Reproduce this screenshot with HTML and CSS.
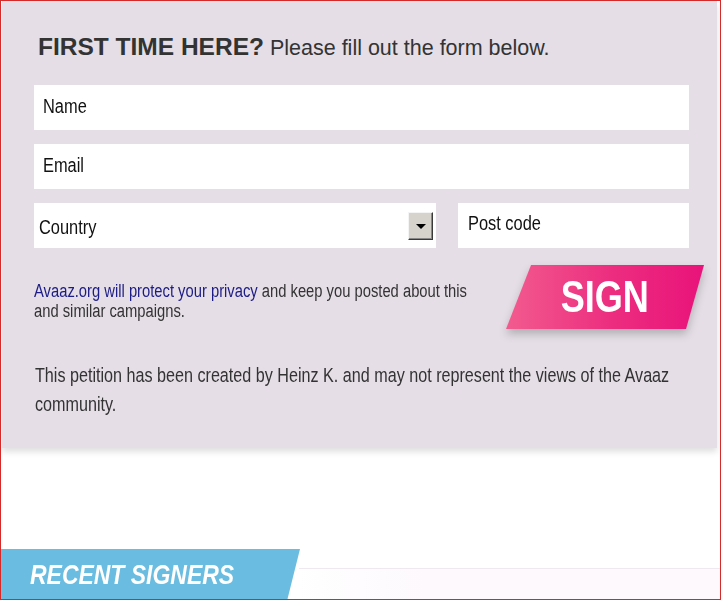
FILE: index.html
```html
<!DOCTYPE html>
<html>
  <head>
    <title>Sign the petition</title>
    <link rel="stylesheet" href="styles.css">
  </head>
  <body>
    <div class="frame">
      <div class="top-tab"></div>

      <div class="sign-box">
        <h2 class="sign-title"><strong>FIRST TIME HERE?</strong> Please fill out the form below.</h2>

        <div class="field"><span class="narrow">Name</span></div>
        <div class="field"><span class="narrow">Email</span></div>

        <div class="field-row">
          <div class="field select">
            <span class="narrow">Country</span>
            <span class="select-arrow"></span>
          </div>
          <div class="field postcode"><span class="narrow">Post code</span></div>
        </div>

        <div class="sign-row">
          <div class="privacy">
            <p class="narrow-block">
              <a href="#">Avaaz.org will protect your privacy</a> and keep you posted about this
              and similar campaigns.
            </p>
          </div>
          <div class="sign-wrap">
            <button class="sign-button"><span class="narrow">SIGN</span></button>
          </div>
        </div>

        <div class="disclaimer">
          <p class="narrow-block">This petition has been created by Heinz K. and may not represent the views of the Avaaz community.</p>
        </div>
      </div>

      <div class="signers">
        <div class="signers-tab"><span class="narrow">RECENT SIGNERS</span></div>
        <div class="signers-rule"></div>
      </div>
    </div>
  </body>
</html>
```

FILE: styles.css
```css
html, body {
  margin: 0;
  padding: 0;
  background: #fff;
}

body {
  font-family: 'Liberation Sans', Arial, sans-serif;
  color: #333;
}

/* no narrow face installed: squeeze Liberation Sans instead */
.narrow {
  display: inline-block;
  white-space: nowrap;
  transform: scaleX(0.82);
  transform-origin: 0 50%;
}

.narrow-block {
  width: calc(100% / 0.82);
  transform: scaleX(0.82);
  transform-origin: 0 0;
}

.frame {
  width: 721px;
  height: 600px;
  box-sizing: border-box;
  border: 1px solid #d42a2a;
  overflow: hidden;
  position: relative;
}

.top-tab {
  height: 0;
  width: 175px;
  margin-left: 505px;
  box-shadow: 0 1px 7px 2px rgba(60, 60, 60, 0.35);
}

.sign-box {
  background: #e5dee6;
  margin: 0 3px 0 1px;
  padding: 31px 28px 29px 32px;
  box-shadow: 0 4px 6px rgba(0, 0, 0, 0.12);
}

.sign-title {
  margin: 0 0 22px 4px;
  font-size: 21.5px;
  font-weight: normal;
  line-height: 30px;
  color: #333;
}

.sign-title strong {
  font-size: 24.5px;
  font-weight: bold;
}

.field {
  background: #fff;
  height: 45px;
  box-sizing: border-box;
  padding: 8px 9px 0;
  margin-bottom: 14px;
  font-size: 20px;
  line-height: 26px;
  color: #111;
}

.field-row {
  display: flex;
  gap: 22px;
}

.select {
  flex: 0 0 402px;
  display: flex;
  align-items: center;
  justify-content: space-between;
  padding: 3px 3px 0 5px;
}

.select-arrow {
  width: 25px;
  height: 28px;
  margin-top: -3px;
  box-sizing: border-box;
  background: #d6d3cd;
  border: 1px solid;
  border-color: #f4f4f4 #3a3a3a #3a3a3a #f4f4f4;
  box-shadow: inset -1px -1px 0 #888;
  display: flex;
  align-items: center;
  justify-content: center;
}

.select-arrow::after {
  content: "";
  border-left: 5px solid transparent;
  border-right: 5px solid transparent;
  border-top: 5px solid #000;
  margin-top: 2px;
}

.postcode {
  flex: 1;
  padding: 7px 10px 0;
}

.sign-row {
  display: flex;
  align-items: flex-start;
  justify-content: space-between;
  margin-top: 3px;
}

.privacy {
  width: 450px;
  margin-top: 16px;
}

.privacy p {
  margin: 0;
  font-size: 18px;
  line-height: 20px;
  color: #333;
}

.privacy a {
  color: #1c1c86;
  text-decoration: none;
}

.sign-wrap {
  margin-right: -15px;
  filter: drop-shadow(0 5px 4px rgba(0, 0, 0, 0.22));
}

.sign-button {
  width: 198px;
  height: 64px;
  border: 0;
  padding: 0;
  background: linear-gradient(90deg, #f25b8e 0%, #ec2c7f 55%, #e9137a 100%);
  clip-path: polygon(25px 0, 198px 0, 180px 64px, 0 64px);
  cursor: pointer;
  display: flex;
  align-items: center;
  justify-content: center;
}

.sign-button .narrow {
  font-weight: bold;
  font-size: 44px;
  color: #fff;
  transform: scaleX(0.82);
  transform-origin: 50% 50%;
}

.disclaimer {
  margin-top: 32px;
}

.disclaimer p {
  margin: 0 0 0 1px;
  font-size: 19.7px;
  line-height: 29px;
  color: #333;
}

.signers {
  margin-top: 101px;
  position: relative;
}

.signers-tab {
  width: 300px;
  height: 52px;
  margin-left: -1px;
  background: #6abde0;
  clip-path: polygon(0 0, 300px 0, 287px 52px, 0 52px);
  display: flex;
  align-items: center;
}

.signers-tab .narrow {
  margin-left: 30px;
  font-weight: bold;
  font-style: italic;
  font-size: 28px;
  color: #fff;
}

.signers-rule {
  position: absolute;
  left: 298px;
  right: 0;
  top: 19px;
  bottom: 0;
  border-top: 1px solid #efe8ef;
  background: linear-gradient(90deg, #fff 0%, #fdf9fd 30%);
}
```
